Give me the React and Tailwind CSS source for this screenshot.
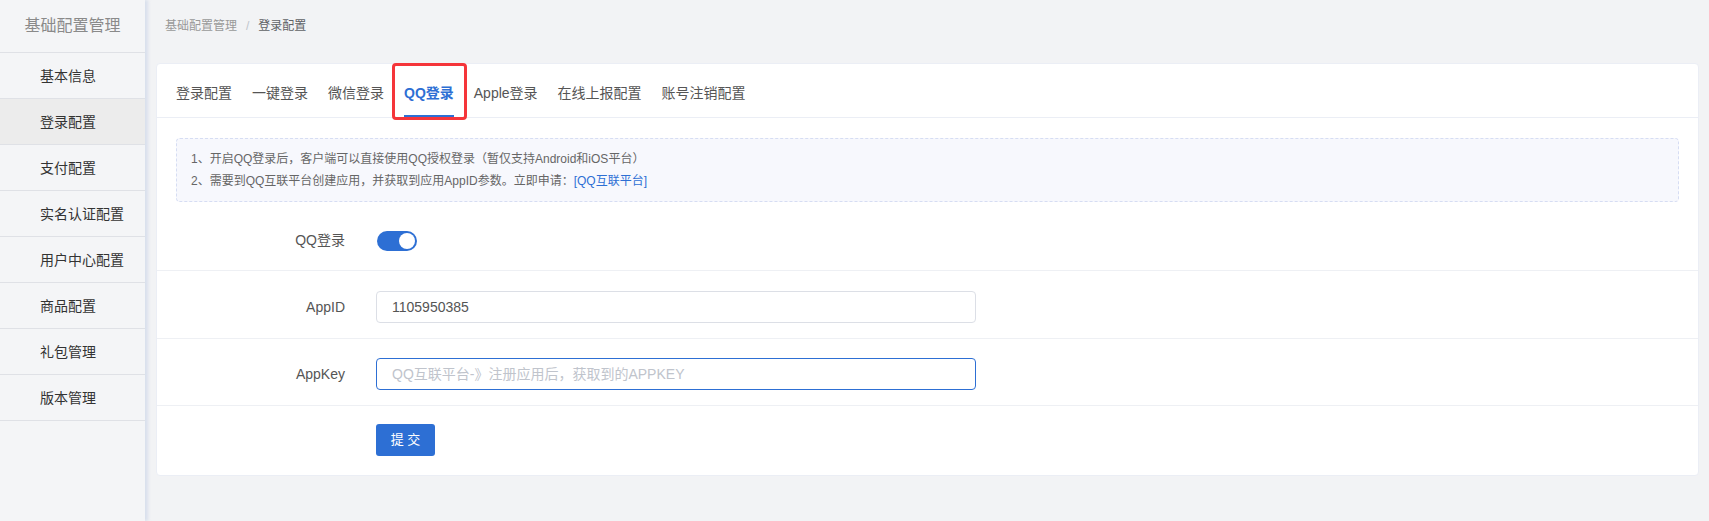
import React from "react";

const menu = ["基本信息", "登录配置", "支付配置", "实名认证配置", "用户中心配置", "商品配置", "礼包管理", "版本管理"];
const tabs = ["登录配置", "一键登录", "微信登录", "QQ登录", "Apple登录", "在线上报配置", "账号注销配置"];

export default function App() {
  return (
    <div className="flex min-h-screen bg-[#f2f3f5] font-['Liberation_Sans','Noto_Sans_CJK_SC',sans-serif]">
      <aside className="w-[145px] shrink-0 bg-[#f4f5f7] shadow-[3px_0_3px_rgba(200,210,230,0.6)] z-10">
        <div className="h-[53px] flex items-center justify-center border-b border-[#dfe1e6] text-[16px] text-[#8a8a8a]">
          基础配置管理
        </div>
        {menu.map((m) => (
          <div
            key={m}
            className={`h-[46px] flex items-center pl-[40px] pt-[2px] border-b border-[#dfe1e6] text-[14px] text-[#333] ${m === "登录配置" ? "bg-[#ececec]" : ""}`}
          >
            {m}
          </div>
        ))}
      </aside>

      <main className="flex-1 pl-[11px] pr-[10px]">
        <div className="h-[52px] flex items-center pl-[9px] text-[12px] gap-[9px]">
          <span className="text-[#999]">基础配置管理</span>
          <span className="text-[#c0c4cc]">/</span>
          <span className="text-[#606266]">登录配置</span>
        </div>

        <div className="mt-[11px] bg-white rounded-[4px] border border-[#ebeef5]">
          <div className="flex h-[54px] border-b border-[#ebeef5] pl-[9px]">
            {tabs.map((t) => {
              const active = t === "QQ登录";
              return (
                <div key={t} className="relative h-[53px] px-[10px] flex items-center pt-[5px] text-[14px]">
                  <span className={`relative h-full flex items-center ${active ? "text-[#2d6fd4] font-bold" : "text-[#555]"}`}>
                    {t}
                    {active && <span className="absolute left-0 right-0 bottom-0 h-[2px] bg-[#2d6fd4]" />}
                  </span>
                  {active && (
                    <span className="absolute left-[-2px] right-[-3px] top-[-1px] bottom-[-3px] border-[3px] border-[#f5353a] rounded-[4px]" />
                  )}
                </div>
              );
            })}
          </div>

          <div className="px-[19px] pt-[20px]">
            <div className="border border-dashed border-[#d6ddf3] bg-[#f7f8fd] rounded-[4px] px-[14px] py-[9px] text-[12px] leading-[22px] text-[#666]">
              <p>1、开启QQ登录后，客户端可以直接使用QQ授权登录（暂仅支持Android和iOS平台）</p>
              <p>
                2、需要到QQ互联平台创建应用，并获取到应用AppID参数。立即申请：
                <span className="text-[#2d6fd4]">[QQ互联平台]</span>
              </p>
            </div>
          </div>

          <div className="flex items-center pt-[28px] pb-[19px] border-b border-[#eef0f4]">
            <label className="w-[188px] text-right text-[14px] text-[#555]">QQ登录</label>
            <div className="ml-[32px] w-[40px] h-[20px] rounded-full bg-[#2d6fd4] flex items-center justify-end pr-[2px]">
              <span className="w-[16px] h-[16px] rounded-full bg-white" />
            </div>
          </div>

          <div className="flex items-center pt-[20px] pb-[15px] border-b border-[#eef0f4]">
            <label className="w-[188px] text-right text-[14px] text-[#555]">AppID</label>
            <input
              readOnly
              value="1105950385"
              className="ml-[31px] w-[600px] h-[32px] border border-[#dcdfe6] rounded-[4px] px-[15px] text-[14px] text-[#555] outline-none"
            />
          </div>

          <div className="flex items-center pt-[19px] pb-[15px] border-b border-[#eef0f4]">
            <label className="w-[188px] text-right text-[14px] text-[#555]">AppKey</label>
            <input
              placeholder="QQ互联平台-》注册应用后，获取到的APPKEY"
              className="ml-[31px] w-[600px] h-[32px] border border-[#2d6fd4] rounded-[4px] px-[15px] text-[14px] text-[#555] placeholder:text-[#c0c4cc] outline-none"
            />
          </div>

          <div className="flex pt-[18px] pb-[19px]">
            <div className="w-[188px]" />
            <button className="ml-[31px] w-[59px] h-[32px] rounded-[3px] bg-[#2d6fd4] text-white text-[13px]">提 交</button>
          </div>
        </div>
      </main>
    </div>
  );
}
